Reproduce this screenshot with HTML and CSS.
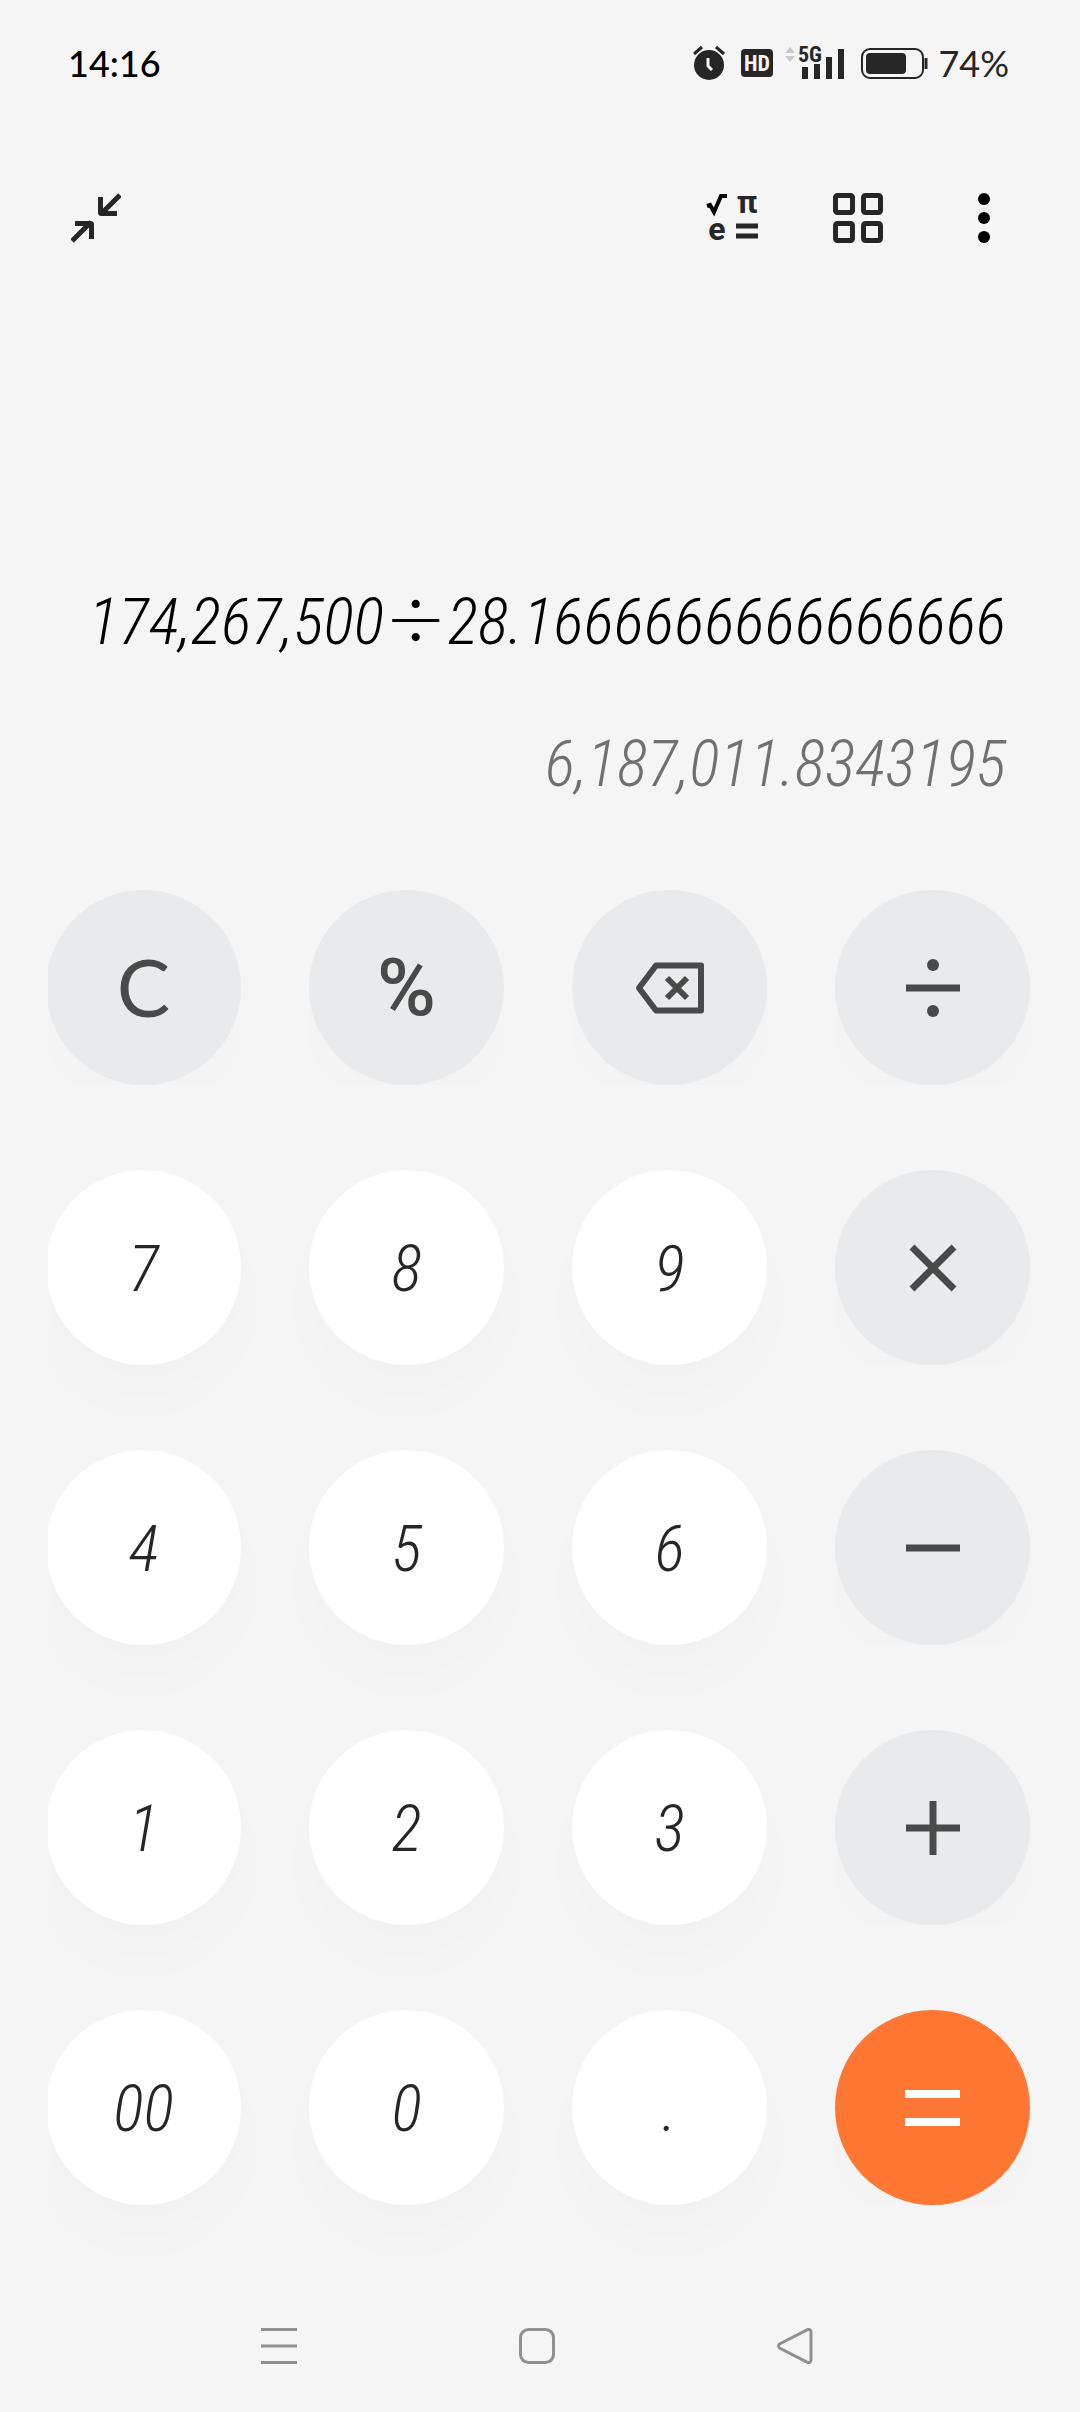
FILE: index.html
```
<!DOCTYPE html>
<html lang="zh-CN">
<head>
  <meta charset="UTF-8">
  <meta name="viewport" content="width=device-width,initial-scale=1">
  <title>计算器</title>
  <link rel="stylesheet" href="styles.css">
</head>
<body>
  <header class="status">
    <span class="status_time">14:16</span>
    <div class="status_icons">
      <svg width="32" height="36" viewBox="0 0 32 36">
        <circle cx="16" cy="20" r="15" fill="#262626"/>
        <path d="M1 9l8-7M31 9l-8-7" stroke="#262626" stroke-width="3"/>
        <path d="M15 13v8l4 4" fill="none" stroke="#f5f5f5" stroke-width="3"/>
      </svg>
      <svg width="32" height="28" viewBox="0 0 32 28">
        <rect width="32" height="28" rx="4" fill="#262626"/>
        <text class="hd" x="16" y="22" text-anchor="middle">HD</text>
      </svg>
      <svg class="signal" width="60" height="38" viewBox="0 -2 60 38">
        <path d="M0 7l5-6 5 6zM0 10h10l-5 6z" fill="#c8c8c8"/>
        <text class="net" x="13" y="16">5G</text>
        <path d="M20 21v12M32 18v15M44 11v22M56 3v30" stroke="#262626" stroke-width="6"/>
      </svg>
      <svg class="battery" width="67" height="31" viewBox="0 0 67 31">
        <rect x="1" y="1" width="61" height="29" rx="8" fill="none" stroke="#262626" stroke-width="2"/>
        <rect x="5" y="5" width="40" height="21" rx="4" fill="#262626"/>
        <path d="M65 10v11" stroke="#262626" stroke-width="3"/>
      </svg>
      <span class="status_power">74%</span>
    </div>
  </header>

  <nav class="toolbar">
    <button class="tool" aria-label="小窗">
      <svg width="50" height="50" viewBox="0 0 50 50" fill="none" stroke="#262626" stroke-width="5">
        <path d="M49 2L30 21M29.500 4v15.500q0 1 1 1H46M1 48l19-19M4 30.500h15.500q1 0 1 1V46"/>
      </svg>
    </button>
    <button class="tool tool_right" aria-label="科学计算">
      <svg class="sci_icon" width="50" height="50" viewBox="0 0 50 50">
        <path d="M0 13l3-1 4 7L14 3h6" fill="none" stroke="#000" stroke-width="4"/>
        <text class="sci" x="40" y="20" text-anchor="middle">π</text>
        <text class="sci" x="10" y="47" text-anchor="middle">e</text>
        <path d="M29 33h22M29 43h22" stroke="#262626" stroke-width="5"/>
      </svg>
    </button>
    <button class="tool" aria-label="换算">
      <svg width="50" height="50" viewBox="0 0 50 50" fill="none" stroke="#262626" stroke-width="5">
        <rect x="2.500" y="2.500" width="17" height="17" rx="2"/>
        <rect x="30.500" y="2.500" width="17" height="17" rx="2"/>
        <rect x="2.500" y="30.500" width="17" height="17" rx="2"/>
        <rect x="30.500" y="30.500" width="17" height="17" rx="2"/>
      </svg>
    </button>
    <button class="tool" aria-label="更多">
      <svg width="50" height="50" viewBox="0 0 50 50">
        <circle cx="25" cy="6" r="6"/>
        <circle cx="25" cy="25" r="6"/>
        <circle cx="25" cy="44" r="6"/>
      </svg>
    </button>
  </nav>

  <main class="display">
    <div class="expr">174,267,500<span class="sign">÷</span>28.1666666666666666</div>
    <div class="result">6,187,011.8343195</div>
  </main>

  <section class="keypad">
    <div class="cell cell_op"><button class="key key_op key_c">C</button></div>
    <div class="cell cell_op"><button class="key key_op key_pct">%</button></div>
    <div class="cell cell_op"><button class="key key_op" aria-label="退格">
      <svg width="70" height="52" viewBox="0 0 70 52" fill="none" stroke="#484a4a" stroke-width="6">
        <path d="M4 26L21 3.500h45v45H21z" stroke-linejoin="round"/>
        <path d="M32 16l20 20M52 16L32 36"/>
      </svg>
    </button></div>
    <div class="cell cell_op"><button class="key key_op" aria-label="除">
      <svg width="56" height="58" viewBox="0 0 56 58">
        <path d="M1 29h54" stroke="#484a4a" stroke-width="7"/>
        <circle cx="28" cy="6" r="6" fill="#484a4a"/>
        <circle cx="28" cy="52" r="6" fill="#484a4a"/>
      </svg>
    </button></div>

    <div class="cell"><button class="key">7</button></div>
    <div class="cell"><button class="key">8</button></div>
    <div class="cell"><button class="key">9</button></div>
    <div class="cell cell_op"><button class="key key_op" aria-label="乘">
      <svg width="56" height="56" viewBox="0 0 56 56">
        <path d="M7 7l42 42M49 7L7 49" stroke="#484a4a" stroke-width="7"/>
      </svg>
    </button></div>

    <div class="cell"><button class="key">4</button></div>
    <div class="cell"><button class="key">5</button></div>
    <div class="cell"><button class="key">6</button></div>
    <div class="cell cell_op"><button class="key key_op" aria-label="减">
      <svg width="56" height="56" viewBox="0 0 56 56">
        <path d="M1 28h54" stroke="#484a4a" stroke-width="7"/>
      </svg>
    </button></div>

    <div class="cell"><button class="key">1</button></div>
    <div class="cell"><button class="key">2</button></div>
    <div class="cell"><button class="key">3</button></div>
    <div class="cell cell_op"><button class="key key_op" aria-label="加">
      <svg width="56" height="56" viewBox="0 0 56 56">
        <path d="M1 28h54M28 1v54" stroke="#484a4a" stroke-width="7"/>
      </svg>
    </button></div>

    <div class="cell"><button class="key">00</button></div>
    <div class="cell"><button class="key">0</button></div>
    <div class="cell"><button class="key">.</button></div>
    <div class="cell cell_op"><button class="key key_op key_eq" aria-label="等于">
      <svg width="56" height="56" viewBox="0 0 56 56">
        <path d="M0 14h55M0 42h55" stroke="#fff" stroke-width="8"/>
      </svg>
    </button></div>
  </section>

  <footer class="navbar">
    <button class="tool" aria-label="最近任务">
      <svg width="36" height="36" viewBox="0 0 36 36">
        <path d="M0 1.500h36M0 18h36M0 34.500h36" stroke="#909090" stroke-width="3"/>
      </svg>
    </button>
    <button class="tool" aria-label="主页">
      <svg width="36" height="36" viewBox="0 0 36 36">
        <rect x="1.500" y="1.500" width="33" height="33" rx="8" fill="none" stroke="#909090" stroke-width="3"/>
      </svg>
    </button>
    <button class="tool" aria-label="返回">
      <svg width="36" height="36" viewBox="0 0 36 36">
        <path d="M2.500 16L30 1.800Q34 0.500 34 4v28q0 3.500-4 2.200L2.500 20q-2-2 0-4z" fill="none" stroke="#909090" stroke-width="3"/>
      </svg>
    </button>
  </footer>
</body>
</html>
```
FILE: styles.css
```
* {
  box-sizing: border-box;
}
body {
  margin: 0;
  min-height: 100vh;
  display: flex;
  flex-direction: column;
  background-color: #f5f5f5;
  color: #000;
  font-family: Lato, "Noto Sans CJK SC", sans-serif;
}
button {
  padding: 0;
  border: 0;
  background: none;
  color: inherit;
  font: inherit;
}
svg {
  display: block;
}

/* 状态栏 */
.status {
  height: 126px;
  padding: 0 71px 0 68px;
  display: flex;
  align-items: center;
  justify-content: space-between;
  font-size: 36px;
}
.status_time {
  font-weight: 500;
}
.status_icons {
  display: flex;
  align-items: center;
  gap: 16px;
  color: #262626;
}
.signal {
  margin-left: -4px;
}
.status_power {
  margin-left: -6px;
}
.hd {
  font: bold 22px "Roboto Condensed", Roboto, sans-serif;
  fill: #f5f5f5;
}
.net {
  font: bold 22px "Roboto Condensed", Roboto, sans-serif;
  fill: #262626;
}

/* 工具栏 */
.toolbar {
  padding: 67px 71px;
  display: flex;
  gap: 76px;
}
.tool_right {
  margin-left: auto;
}
.sci_icon {
  overflow: visible;
}
.sci {
  font: bold 32px Roboto, sans-serif;
  fill: #262626;
}

/* 显示区 */
.display {
  flex: 1;
  padding: 0 74px 54px 40px;
  display: flex;
  flex-direction: column;
  justify-content: flex-end;
  text-align: right;
  line-height: 142px;
}
.display,
.key {
  font-family: "Roboto Condensed", Roboto, sans-serif;
  font-size: 64px;
  font-style: italic;
  font-weight: 300;
}
.sign {
  font-family: "Noto Sans CJK SC", sans-serif;
  font-style: normal;
  line-height: 1;
}
.result {
  color: #707070;
}

/* 键盘 */
.keypad {
  padding: 0 50px 75px 46px;
  display: grid;
  grid-template-columns: repeat(4, 1fr);
  gap: 85px 68px;
  clip-path: inset(0 0 0 48px);
}
.cell {
  aspect-ratio: 1;
}
.cell_op {
  overflow: hidden;
}
.key {
  width: 100%;
  height: 100%;
  padding-top: 4px;
  display: flex;
  align-items: center;
  justify-content: center;
  border-radius: 50%;
  background-color: #fff;
  color: #262626;
  box-shadow: 0 36px 60px rgba(0,0,0,.015);
}
.key_op {
  padding-top: 0;
  background-color: #e8eaec;
  color: #484a4a;
  font-style: normal;
  box-shadow: 0 20px 50px rgba(0,0,0,.01);
}
.key_c {
  padding-bottom: 4px;
  font-family: Lato, sans-serif;
  font-size: 80px;
  font-weight: 400;
}
.key_pct {
  font-family: Roboto, sans-serif;
  font-size: 80px;
  font-weight: 500;
}
.key_eq {
  background-color: #ff7733;
}

/* 导航栏 */
.navbar {
  height: 132px;
  padding-right: 6px;
  display: flex;
  align-items: center;
  justify-content: center;
  gap: 222px;
}
```
